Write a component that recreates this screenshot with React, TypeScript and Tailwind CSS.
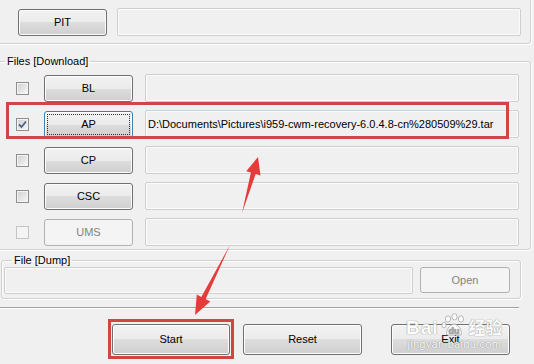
import React from 'react';

const font = "font-['Liberation_Sans','Noto_Sans_CJK_SC',sans-serif]";

const Btn: React.FC<{ label: string; w: string; h: string; disabled?: boolean; focused?: boolean; className?: string }> = ({ label, w, h, disabled, focused, className = '' }) => {
  if (disabled) {
    return (
      <div className={`${w} ${h} ${className} shrink-0 flex items-center justify-center rounded-[3px] border border-[#adb2b5] bg-[#f4f4f4] text-[#838383]`}>
        {label}
      </div>
    );
  }
  return (
    <div
      className={`${w} ${h} ${className} shrink-0 flex p-[2px] rounded-[3px] border ${focused ? 'border-[#3c7fb1]' : 'border-[#707070]'} bg-[linear-gradient(#f2f2f2_0%,#ebebeb_50%,#dddddd_50%,#cfcfcf_100%)] shadow-[inset_0_0_0_1px_#fcfcfc]`}
    >
      <span className={`flex-1 flex items-center justify-center border ${focused ? 'border-dotted border-[#333]' : 'border-transparent'}`}>{label}</span>
    </div>
  );
};

const TextBox: React.FC<{ w: string; h: string; text?: string; className?: string }> = ({ w, h, text, className = '' }) => (
  <div className={`${w} ${h} ${className} shrink-0 flex items-center pl-[2px] border border-[#cfcfcf] rounded-[2px] shadow-[inset_0_0_0_1px_#fbfbfb] bg-[#f0f0f0] whitespace-nowrap overflow-hidden`}>
    {text}
  </div>
);

const Check: React.FC<{ checked?: boolean; disabled?: boolean }> = ({ checked, disabled }) => (
  <div
    className={`w-[13px] h-[13px] shrink-0 border flex items-center justify-center ${
      disabled ? 'border-[#c4c4c4] bg-[#f4f4f4]' : 'border-[#8e8f8f] bg-[linear-gradient(135deg,#cfcfcf,#f8f8f8)] shadow-[inset_0_0_0_1px_#f4f4f4]'
    }`}
  >
    {checked && (
      <svg width="9" height="9" viewBox="0 0 9 9">
        <path d="M1 4.5 L3.5 7 L8 1.5" fill="none" stroke="#4d6185" strokeWidth="1.8" />
      </svg>
    )}
  </div>
);

const rows = [
  { id: 'BL' },
  { id: 'AP', checked: true, focused: true, text: 'D:\\Documents\\Pictures\\i959-cwm-recovery-6.0.4.8-cn%280509%29.tar' },
  { id: 'CP' },
  { id: 'CSC' },
  { id: 'UMS', disabled: true },
];

const App: React.FC = () => {
  return (
    <div className={`w-[534px] h-[364px] overflow-hidden bg-[#f0f0f0] relative flex flex-col text-[11px] text-black ${font}`}>
      {/* PIT group (top cut off) */}
      <div className="-mt-[10px] -ml-[3px] w-[534px] h-[54px] shrink-0 border border-[#d0d0d0] rounded-[3px] shadow-[inset_1px_1px_0_#fff,1px_1px_0_#fff] flex items-start pt-[17px] pl-[20px]">
        <Btn label="PIT" w="w-[89px]" h="h-[27px]" className="mt-[1px]" />
        <TextBox w="w-[404px]" h="h-[28px]" className="ml-[10px]" />
      </div>

      {/* Files [Download] */}
      <fieldset className="mt-[10px] -ml-[3px] w-[534px] shrink-0 border border-[#d0d0d0] rounded-[3px] shadow-[inset_1px_1px_0_#fff,1px_1px_0_#fff]">
        <legend className="ml-[7px] px-[2px] leading-[14px]">Files [Download]</legend>
        <div className="flex flex-col gap-[8px] pt-[6px] pb-[3px] pl-[18px]">
          {rows.map(r => (
            <div key={r.id} className="flex items-center h-[28px]">
              <Check checked={r.checked} disabled={r.disabled} />
              <Btn label={r.id} w="w-[89px]" h="h-[27px]" className="ml-[15px]" disabled={r.disabled} focused={r.focused} />
              <TextBox w="w-[374px]" h="h-[28px]" className="ml-[12px]" text={r.text} />
            </div>
          ))}
        </div>
      </fieldset>

      {/* File [Dump] */}
      <fieldset className="mt-[3px] ml-[1px] w-[520px] shrink-0 border border-[#d0d0d0] rounded-[3px] shadow-[inset_1px_1px_0_#fff,1px_1px_0_#fff]">
        <legend className="ml-[10px] px-[2px] leading-[14px]">File [Dump]</legend>
        <div className="flex items-start pl-[2px] pb-[4px]">
          <TextBox w="w-[409px]" h="h-[27px]" />
          <Btn label="Open" w="w-[90px]" h="h-[26px]" className="ml-[7px]" disabled />
        </div>
      </fieldset>

      {/* separator */}
      <div className="mt-[8px] w-[519px] h-[2px] shrink-0 border-t border-[#a0a0a0] bg-white" />

      {/* bottom buttons */}
      <div className="mt-[15px] flex pl-[112px]">
        <Btn label="Start" w="w-[118px]" h="h-[31px]" />
        <Btn label="Reset" w="w-[119px]" h="h-[31px]" className="ml-[13px]" />
        <Btn label="Exit" w="w-[119px]" h="h-[31px]" className="ml-[29px]" />
      </div>

      {/* annotations */}
      <div className="absolute left-[6px] top-[102px] w-[503px] h-[37px] border-[3px] border-[#d24545]" />
      <div className="absolute left-[108px] top-[319px] w-[126px] h-[40px] border-[3px] border-[#d24545]" />
      <svg className="absolute left-0 top-0" width="534" height="364" viewBox="0 0 534 364">
        <polygon points="242,213 255.7,174 260.5,175.5 258,157 246.2,171.2 250.9,172.6" fill="#e63b3b" />
        <polygon points="230,245 205.7,299.1 210.2,301.5 195,315 196.8,294.6 201.3,296.9" fill="#e63b3b" />
      </svg>

      {/* watermark */}
      <div className="absolute left-[406px] top-[313px] flex flex-col items-center text-white opacity-85 [text-shadow:0_0_1px_#8a8a8a,0_0_1px_#8a8a8a]">
        <div className="flex items-end leading-none">
          <span className="text-[19px] font-bold tracking-[1px]">Bai</span>
          <svg width="28" height="24" viewBox="0 0 28 24" className="mx-[1px]">
            <g fill="#fff" stroke="#9a9a9a" strokeWidth="0.8">
              <ellipse cx="8" cy="6" rx="2.6" ry="3.2" />
              <ellipse cx="14.5" cy="3.8" rx="2.6" ry="3.2" />
              <ellipse cx="21" cy="6" rx="2.6" ry="3.2" />
              <ellipse cx="4" cy="12" rx="2.2" ry="2.8" />
              <path d="M7 22 C5 18 10 11 14 11 C18 11 23 18 21 22 Z" />
            </g>
            <text x="14" y="21" textAnchor="middle" fontSize="9" fontWeight="bold" fill="#9a9a9a" fontFamily="Liberation Sans">du</text>
          </svg>
          <span className="text-[17px] font-bold">经验</span>
        </div>
        <span className="text-[11px] leading-[13px] tracking-[0.3px] mt-[1px]">jingyan.baidu.com</span>
      </div>
    </div>
  );
};

export default App;
